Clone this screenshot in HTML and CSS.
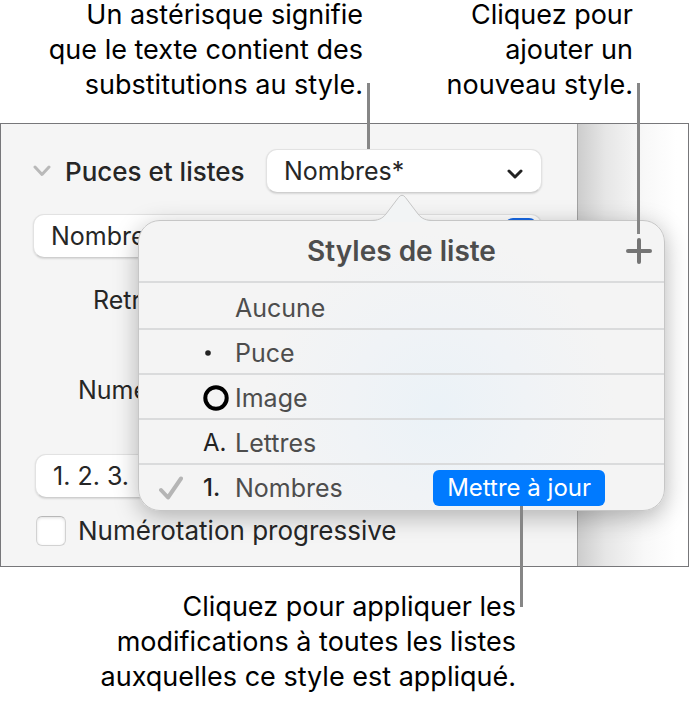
FILE: index.html
```html
<!DOCTYPE html>
<html lang="fr">
<head>
<meta charset="utf-8">
<title>Styles de liste</title>
<link rel="stylesheet" href="styles.css">
</head>
<body>
<main class="figure">
  <div class="captions">
    <p class="caption caption-style">Un astérisque signifie<br>que le texte contient des<br>substitutions au style.</p>
    <p class="caption caption-add">Cliquez pour<br>ajouter un<br>nouveau style.</p>
  </div>

  <div class="window">
    <section class="sidebar">
      <div class="heading-row">
        <svg class="disclosure" viewBox="0 0 18 12" aria-hidden="true"><path d="M2 2l7 7.500 7-7.500"/></svg>
        <label class="heading" for="list-style">Puces et listes</label>
        <div class="field field-style">
          <select id="list-style" class="select"><option>Nombres*</option></select>
          <svg class="chevron" viewBox="0 0 18 12" aria-hidden="true"><path d="M3 3l6 6 6-6"/></svg>
        </div>
      </div>
      <div class="field field-kind">
        <select class="select" aria-label="Nombres"><option>Nombres</option></select>
        <span class="stepper"></span>
      </div>
      <p class="setting setting-indent">Retrait</p>
      <p class="setting setting-number">Numéro</p>
      <div class="field field-format">
        <select class="select" aria-label="1. 2. 3."><option>1. 2. 3.</option></select>
      </div>
      <div class="check-row">
        <input class="checkbox" type="checkbox" id="tiered">
        <label for="tiered">Numérotation progressive</label>
      </div>
    </section>
    <div class="canvas"></div>

    <section class="popover">
      <svg class="arrow" viewBox="0 0 64 29" aria-hidden="true"><path d="M0 28C8 28 12 26 16 21L28.500 4.500Q32 0 35.500 4.500L48 21C52 26 56 28 64 28V29H0Z" fill="#f2f4f5"/><path d="M0 27.500C8 27.500 12 26 16 21L28.500 4.500Q32 0 35.500 4.500L48 21C52 26 56 27.500 64 27.500" fill="none" stroke="#c6c6c6"/></svg>
      <header class="popover-head">
        <h2 class="title">Styles de liste</h2>
        <button class="add" type="button" aria-label="Ajouter">
          <svg viewBox="0 0 26 26" aria-hidden="true"><path d="M13 2v22M2 13h22"/></svg>
        </button>
      </header>
      <ul class="styles">
        <li class="style"><span class="mark"></span><span class="bullet"></span><span class="name">Aucune</span></li>
        <li class="style"><span class="mark"></span><span class="bullet"><svg class="dot" viewBox="0 0 6 6" aria-hidden="true"><circle cx="3" cy="3" r="2.800"/></svg></span><span class="name">Puce</span></li>
        <li class="style"><span class="mark"></span><span class="bullet"><svg class="ring" viewBox="0 0 26 26" aria-hidden="true"><circle cx="13" cy="13" r="10.700"/></svg></span><span class="name">Image</span></li>
        <li class="style"><span class="mark"></span><span class="bullet">A.</span><span class="name">Lettres</span></li>
        <li class="style">
          <span class="mark"><svg class="check" viewBox="0 0 24 24" aria-hidden="true"><path d="M2 14l7 7.500L22 2.500"/></svg></span>
          <span class="bullet bullet-number">1.</span>
          <span class="name">Nombres</span>
          <button class="update" type="button">Mettre à jour</button>
        </li>
      </ul>
    </section>
  </div>

  <p class="caption caption-update">Cliquez pour appliquer les<br>modifications à toutes les listes<br>auxquelles ce style est appliqué.</p>
</main>
</body>
</html>
```
FILE: styles.css
```css
* {
  box-sizing: border-box;
}

body {
  margin: 0;
  background: #fff;
  color: #000;
  font-family: Inter, "Liberation Sans", sans-serif;
  font-size: 25px;
}

p, h2, ul {
  margin: 0;
  padding: 0;
}

svg {
  display: block;
  fill: none;
}

.captions {
  display: flex;
  padding-bottom: 21px;
}

.caption {
  position: relative;
  font-size: 27px;
  line-height: 35px;
  text-align: right;
  white-space: nowrap;
}

.captions .caption {
  margin-top: -3px;
}

.caption-style {
  width: 363px;
}

.caption-add {
  width: 270px;
}

.caption-update {
  width: 516px;
  margin-top: 22px;
}

/* Leader lines from each caption to its control */
.caption::after {
  content: "";
  position: absolute;
  z-index: 3;
  left: calc(100% + 4px);
  width: 3px;
  background: #868686;
}

.caption-style::after,
.caption-add::after {
  top: 86px;
  height: 66px;
}

.caption-add::after {
  height: 151px;
}

.caption-update::after {
  bottom: 87px;
  height: 101px;
}

.window {
  position: relative;
  display: flex;
  border: 1px solid #77777a;
}

.sidebar {
  width: 577px;
  padding: 25px 35px 20px 32px;
  background: #f5f5f5;
  border-right: 1px solid #a2a2a2;
  color: #262626;
}

.canvas {
  flex: 1;
  background: linear-gradient(90deg, #cdcdcd, #e6e6e6 25%, #f8f8f8 60%, #fff 90%);
}

.heading-row {
  display: flex;
  align-items: center;
}

.disclosure {
  width: 18px;
  height: 12px;
  margin-right: 14px;
  stroke: #b9b9b9;
  stroke-width: 3;
  stroke-linecap: round;
  stroke-linejoin: round;
}

.heading {
  flex: 1;
  font-size: 26px;
  font-weight: 500;
}

.field {
  position: relative;
  height: 44px;
  border: 1px solid #e2e2e2;
  border-bottom-color: #cfcfcf;
  border-radius: 11px;
  background: #fff;
  box-shadow: 0 1px 2px rgba(0, 0, 0, 0.12);
}

.select {
  display: block;
  width: 100%;
  height: 100%;
  padding: 0 17px;
  border: 0;
  background: none;
  color: inherit;
  font: inherit;
  appearance: none;
}

.field-style {
  width: 276px;
}

.chevron {
  position: absolute;
  right: 17px;
  top: 18px;
  width: 18px;
  height: 12px;
  stroke: #222;
  stroke-width: 3;
  stroke-linecap: round;
  stroke-linejoin: round;
}

.field-kind {
  margin-top: 21px;
}

.stepper {
  position: absolute;
  top: 3px;
  right: 4px;
  width: 32px;
  height: 36px;
  border-radius: 8px;
  background: #1668e6;
}

.setting {
  line-height: 30px;
}

.setting-indent {
  padding: 27px 0 0 60px;
}

.setting-number {
  padding: 60px 0 0 45px;
}

.field-format {
  margin: 49px 0 0 2px;
}

.check-row {
  display: flex;
  align-items: center;
  gap: 12px;
  margin-top: 18px;
  padding-left: 3px;
  font-size: 26px;
  line-height: 30px;
}

.checkbox {
  width: 30px;
  height: 30px;
  margin: 0;
  border: 1px solid #d2d2d2;
  border-top-color: #b8b8b8;
  border-radius: 6px;
  background: #fff;
  box-shadow: inset 0 1px 3px rgba(0, 0, 0, 0.12);
  appearance: none;
}

.popover {
  position: absolute;
  z-index: 2;
  top: 96px;
  left: 137px;
  width: 527px;
  border: 1px solid #c6c6c6;
  border-radius: 22px;
  background: radial-gradient(circle at 57% 65%, #ebf2f7, #f0f3f6 25%, #f4f4f4 50%);
  box-shadow: 0 6px 24px rgba(0, 0, 0, 0.28);
  color: #4d4d4d;
}

.arrow {
  position: absolute;
  left: 231px;
  bottom: calc(100% - 1px);
  width: 64px;
  height: 29px;
}

.popover-head {
  position: relative;
  display: flex;
  align-items: center;
  justify-content: center;
  height: 60px;
}

.title {
  font-size: 28px;
  font-weight: 600;
}

.add {
  position: absolute;
  right: 12px;
  top: 17px;
  width: 26px;
  height: 26px;
  padding: 0;
  border: 0;
  background: none;
}

.add svg {
  stroke: #757575;
  stroke-width: 4;
  stroke-linecap: round;
}

.styles {
  list-style: none;
}

.style {
  display: flex;
  align-items: center;
  height: 45px;
  padding: 2px 59px 0 20px;
  border-top: 2px solid #dadbdc;
}

.style:first-child {
  height: 47px;
  padding-top: 4px;
}

.style:last-child {
  height: 47px;
  padding-bottom: 2px;
}

.mark {
  width: 44px;
}

.bullet {
  width: 32px;
  color: #222;
  font-size: 24px;
}

.bullet-number {
  font-weight: 500;
}

.dot {
  width: 6px;
  height: 6px;
  margin-left: 2px;
  fill: #222;
}

.ring {
  width: 26px;
  height: 26px;
  stroke: #000;
  stroke-width: 4;
}

.check {
  width: 24px;
  height: 24px;
  stroke: #b5b5b5;
  stroke-width: 4;
  stroke-linecap: round;
  stroke-linejoin: round;
}

.update {
  height: 36px;
  margin-left: auto;
  padding: 0 14px;
  border: 0;
  border-radius: 6px;
  background: #007aff;
  color: #fff;
  font: inherit;
  font-size: 24px;
}
```
